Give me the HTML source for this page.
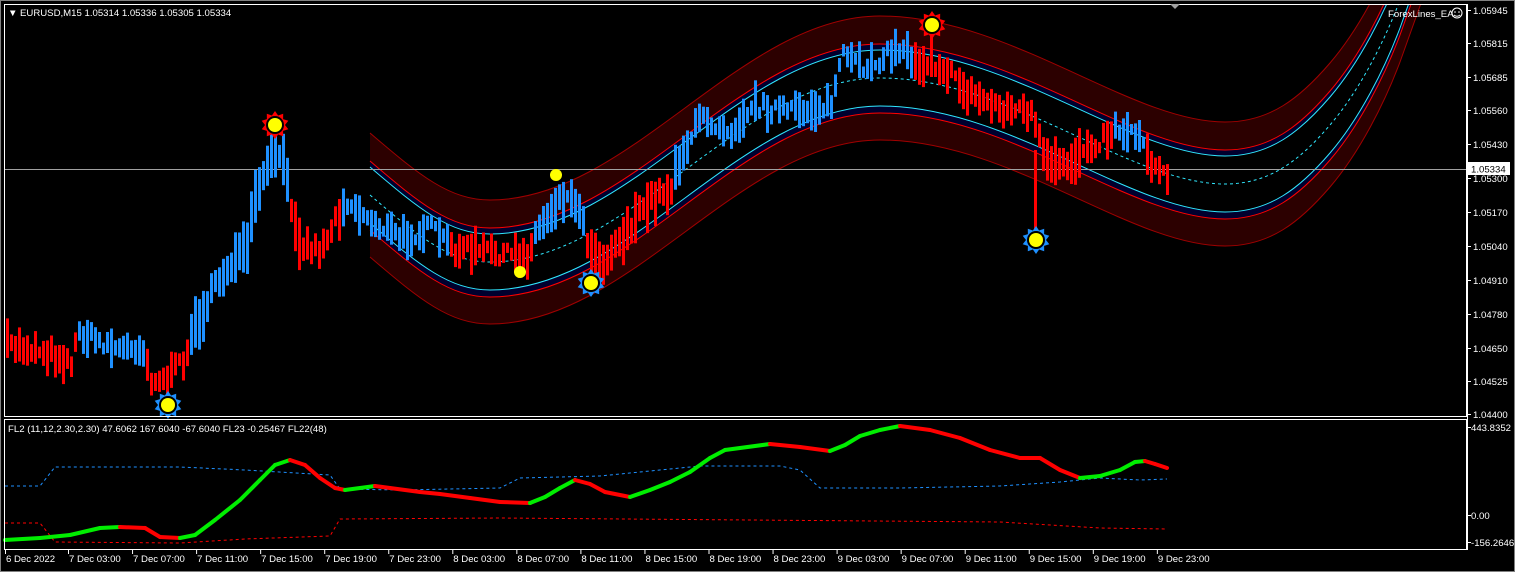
<!DOCTYPE html>
<html><head><meta charset="utf-8"><style>
html,body{margin:0;padding:0;background:#000;width:1515px;height:572px;overflow:hidden}
svg{display:block}
text{font-family:"Liberation Sans",sans-serif;font-size:9.6px;fill:#fff}
</style></head><body>
<svg id="s" width="1515" height="572" viewBox="0 0 1515 572" xmlns="http://www.w3.org/2000/svg">
<defs>
<clipPath id="cb"><rect x="369" y="5" width="1097" height="411"/></clipPath>
<clipPath id="cm"><rect x="5" y="5" width="1461" height="411"/></clipPath>
<path id="cf" d="M370,195 C420,238 450,262 490,262 C630,262 740,78 880,78 C1010,78 1130,184 1225,184 C1270,184 1300,160 1330,125 C1360,90 1385,40 1400,0 L1425,-70 L1440,-120 L1520,-120 L1520,700 L370,700 Z"/>
<path id="cl" d="M370,195 C420,238 450,262 490,262 C630,262 740,78 880,78 C1010,78 1130,184 1225,184 C1270,184 1300,160 1330,125 C1360,90 1385,40 1400,0 L1425,-70 L1440,-120"/>
</defs>
<rect x="0" y="0" width="1515" height="572" fill="#000"/>
<rect x="0.5" y="0.5" width="1514" height="571" fill="none" stroke="#808080"/>
<g clip-path="url(#cb)">
<use href="#cf" transform="translate(0,-62)" fill="#2c0000"/>
<use href="#cf" transform="translate(0,-34)" fill="#00002e"/>
<use href="#cf" transform="translate(0,-28)" fill="#000"/>
<use href="#cf" transform="translate(0,28)" fill="#00002e"/>
<use href="#cf" transform="translate(0,35)" fill="#2c0000"/>
<use href="#cf" transform="translate(0,62)" fill="#000"/>
<g fill="none">
<use href="#cl" transform="translate(0,-62)" stroke="#a00000"/>
<use href="#cl" transform="translate(0,-34)" stroke="#ff0000"/>
<use href="#cl" transform="translate(0,-28)" stroke="#30e8ff"/>
<use href="#cl" stroke="#30e8ff" stroke-dasharray="3,3"/>
<use href="#cl" transform="translate(0,28)" stroke="#30e8ff"/>
<use href="#cl" transform="translate(0,35)" stroke="#ff0000"/>
<use href="#cl" transform="translate(0,62)" stroke="#a00000"/>
</g>
</g>
<line x1="5" y1="169.5" x2="1466" y2="169.5" stroke="#a0a0a0"/>
<g id="bars" clip-path="url(#cm)"></g>
<g id="stars"></g>
<g id="osc"></g>
<rect x="4.5" y="4.5" width="1462" height="412" fill="none" stroke="#fff"/>
<rect x="4.5" y="419.5" width="1462" height="130" fill="none" stroke="#fff"/>
<polygon points="1170,4 1180,4 1175,9" fill="#a0a0a0"/>
<text x="8" y="16" font-size="8">▼</text>
<text x="20" y="16">EURUSD,M15  1.05314 1.05336 1.05305 1.05334</text>
<text x="1388" y="17">ForexLines_EA</text>
<circle cx="1457" cy="13" r="5" fill="none" stroke="#fff"/>
<circle cx="1455" cy="12" r="0.8" fill="#fff"/><circle cx="1459" cy="12" r="0.8" fill="#fff"/>
<path d="M1454,15 Q1457,17.5 1460,15" fill="none" stroke="#fff"/>
<text x="8" y="432" font-size="9.3">FL2 (11,12,2.30,2.30) 47.6062 167.6040 -67.6040  FL23 -0.25467  FL22(48)</text>
<g id="axis"></g>
<rect x="1468" y="162" width="42" height="13" fill="#fff"/>
<text x="1471" y="172.5" style="fill:#000">1.05334</text>
</svg>
<script>
var NS="http://www.w3.org/2000/svg";
function el(t,a,p){var e=document.createElementNS(NS,t);for(var k in a)e.setAttribute(k,a[k]);if(p)p.appendChild(e);return e;}
var seed=7;function rnd(){seed=(seed*16807)%2147483647;return (seed-1)/2147483646;}
var kp=[[5,345],[40,350],[70,362],[78,332],[95,340],[120,350],[140,345],[150,378],[165,382],[185,355],[190,335],[215,285],[230,262],[245,252],[255,195],[265,172],[275,150],[282,165],[290,205],[300,245],[320,250],[330,228],[345,200],[365,218],[400,238],[430,228],[450,248],[490,252],[525,258],[535,232],[560,195],[578,205],[585,240],[600,262],[620,238],[650,200],[670,188],[675,165],[700,118],[730,130],[750,105],[790,112],[830,105],[840,55],[860,68],[900,48],[915,62],[940,65],[965,92],[1000,108],[1030,112],[1045,165],[1065,168],[1085,145],[1100,140],[1115,128],[1140,135],[1150,162],[1168,176]];
function interp(x){for(var i=0;i<kp.length-1;i++){if(x>=kp[i][0]&&x<=kp[i+1][0]){var t=(x-kp[i][0])/(kp[i+1][0]-kp[i][0]);return kp[i][1]+t*(kp[i+1][1]-kp[i][1]);}}return kp[kp.length-1][1];}
var reds=[[5,76],[145,188],[288,340],[448,530],[584,673],[912,1113],[1143,1172]];
function isRed(x){for(var i=0;i<reds.length;i++)if(x>=reds[i][0]&&x<=reds[i][1])return true;return false;}
var bars=document.getElementById('bars');
for(var x=6;x<1170;x+=4){var c=interp(x)+(rnd()-0.5)*14;var h=5+rnd()*16;var big=(x>180&&x<300)||(x>1030&&x<1080)||(x>580&&x<680);if(big)h+=6;
el('rect',{x:x,y:(c-h).toFixed(1),width:3,height:(2*h).toFixed(1),fill:isRed(x)?'#ff0000':'#1e90ff'},bars);}
el('rect',{x:1034,y:150,width:3,height:92,fill:'#ff0000'},bars);
el('rect',{x:930,y:25,width:3,height:40,fill:'#ff0000'},bars);
var st=document.getElementById('stars');
function star(cx,cy,col,ro,ri){var p=[];for(var i=0;i<20;i++){var r=i%2?ri:ro;var a=Math.PI*i/10-Math.PI/2;p.push((cx+r*Math.cos(a)).toFixed(1)+','+(cy+r*Math.sin(a)).toFixed(1));}
el('polygon',{points:p.join(' '),fill:col},st);el('circle',{cx:cx,cy:cy,r:ri-1,fill:'#000'},st);el('circle',{cx:cx,cy:cy,r:ri-3,fill:'#ffff00'},st);}
star(275,125,'#ff0000',14,10);star(932,25,'#ff0000',14,10);
star(168,405,'#1e90ff',14,10);star(591,283,'#1e90ff',14,10);star(1036,240,'#1e90ff',14,10);
el('circle',{cx:556,cy:175,r:6,fill:'#ffff00'},st);el('circle',{cx:520,cy:272,r:6,fill:'#ffff00'},st);
var osc=document.getElementById('osc');
function pl(pts,attrs){el('polyline',Object.assign({points:pts.map(function(p){return p.join(',')}).join(' '),fill:'none'},attrs),osc);}
pl([[5,486],[40,486],[55,467],[180,467],[245,470],[330,475],[340,489],[400,490],[500,488],[520,478],[600,476],[700,466],[780,466],[800,470],[820,488],[900,488],[1000,486],[1060,482],[1100,478],[1140,480],[1167,479]],{stroke:'#1e90ff','stroke-dasharray':'3,3'});
pl([[5,523],[40,523],[55,542],[180,543],[245,539],[330,536],[340,519],[500,518],[1000,522],[1100,528],[1167,529]],{stroke:'#ff0000','stroke-dasharray':'3,3'});
var op=[[5,540],[40,538],[70,535],[100,528],[120,527],[145,528],[160,537],[180,538],[195,535],[215,520],[240,500],[260,480],[275,465],[290,460],[305,465],[320,478],[335,488],[345,490],[375,486],[390,488],[420,492],[440,494],[470,498],[500,502],[530,503],[545,497],[560,488],[575,480],[590,484],[605,492],[630,497],[650,490],[670,482],[690,472],[710,458],[725,450],[770,444],[800,447],[830,451],[845,445],[860,436],[880,430],[900,426],[930,430],[960,438],[990,450],[1020,458],[1040,458],[1060,470],[1080,478],[1100,476],[1120,470],[1135,462],[1145,461],[1155,464],[1167,468]];
for(var i=0;i<op.length-1;i++){var up=op[i+1][1]<op[i][1];el('line',{x1:op[i][0],y1:op[i][1],x2:op[i+1][0],y2:op[i+1][1],stroke:up?'#00ee00':'#ff0000','stroke-width':4,'stroke-linecap':'round'},osc);}
var ax=document.getElementById('axis');
el('line',{x1:1467.5,y1:4,x2:1467.5,y2:550,stroke:'#fff'},ax);
var pr=[['1.05945',10],['1.05815',43],['1.05685',77],['1.05560',110],['1.05430',144],['1.05300',178],['1.05170',212],['1.05040',246],['1.04910',280],['1.04780',314],['1.04650',348],['1.04525',381],['1.04400',414]];
pr.forEach(function(p){el('line',{x1:1467,y1:p[1]+.5,x2:1471,y2:p[1]+.5,stroke:'#fff'},ax);var t=el('text',{x:1473,y:p[1]+4},ax);t.textContent=p[0];});
[['443.8352',427],['0.00',515],['-156.2646',542]].forEach(function(p){el('line',{x1:1467,y1:p[1]+.5,x2:1471,y2:p[1]+.5,stroke:'#fff'},ax);var t=el('text',{x:1471,y:p[1]+4},ax);t.textContent=p[0];});
var tl=['6 Dec 2022','7 Dec 03:00','7 Dec 07:00','7 Dec 11:00','7 Dec 15:00','7 Dec 19:00','7 Dec 23:00','8 Dec 03:00','8 Dec 07:00','8 Dec 11:00','8 Dec 15:00','8 Dec 19:00','8 Dec 23:00','9 Dec 03:00','9 Dec 07:00','9 Dec 11:00','9 Dec 15:00','9 Dec 19:00','9 Dec 23:00'];
tl.forEach(function(s,i){var x=i==0?5:68+(i-1)*64.05;el('line',{x1:x+.5,y1:550,x2:x+.5,y2:554,stroke:'#fff'},ax);var t=el('text',{x:x+1,y:562},ax);t.textContent=s;});
</script>
</body></html>
